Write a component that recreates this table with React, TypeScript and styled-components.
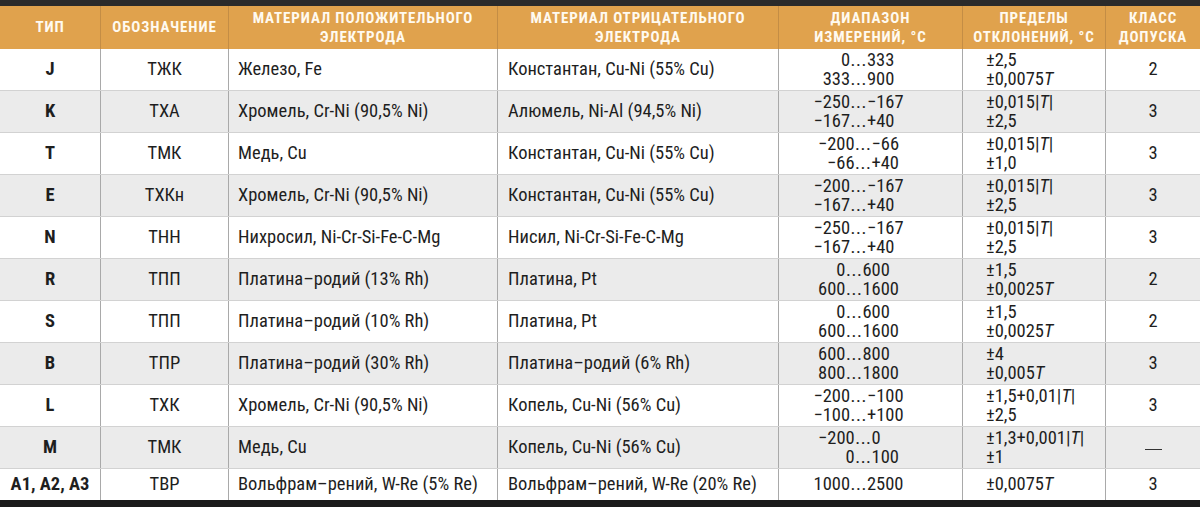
import React from "react";
import styled, { createGlobalStyle } from "styled-components";

const GlobalStyle = createGlobalStyle`
  html, body { margin: 0; padding: 0; background: #fff; }
  body { font-family: "Roboto Condensed", "Roboto", "Liberation Sans", sans-serif; color: #1e1e1e; }
`;

const COLS = "100px 128px 269px 281px 184px 143px 95px";

const Table = styled.div`
  width: 1200px;
  border-top: 6px solid #2b2b2b;
  border-bottom: 7px solid #1b1b1b;
  display: flex;
  flex-direction: column;
`;

const HeadRow = styled.div`
  display: grid;
  grid-template-columns: ${COLS};
  height: 43px;
  background: #e0a24d;
`;

const HeadCell = styled.div<{ $first?: boolean }>`
  display: flex;
  align-items: center;
  justify-content: center;
  text-align: center;
  border-left: ${(p) => (p.$first ? "none" : "1px solid #c48d45")};
  font-family: "Roboto Condensed", "Roboto", sans-serif;
  font-weight: 700;
  font-size: 15px;
  line-height: 19px;
  letter-spacing: 0.9px;
  text-transform: uppercase;
  color: #fffaf0;
`;

const Row = styled.div<{ $shaded: boolean; $last?: boolean }>`
  display: grid;
  grid-template-columns: ${COLS};
  height: ${(p) => (p.$last ? "31px" : "42px")};
  box-sizing: border-box;
  border-bottom: ${(p) => (p.$last ? "none" : "1px solid #d2d2d2")};
  background: ${(p) => (p.$shaded ? "#ebebeb" : "#ffffff")};
`;

type Align = "center" | "left" | "range";

const Cell = styled.div<{ $align: Align; $pad?: number; $first?: boolean; $bold?: boolean }>`
  display: flex;
  align-items: center;
  justify-content: ${(p) => (p.$align === "left" ? "flex-start" : "center")};
  padding-left: ${(p) => (p.$align === "left" ? `${p.$pad ?? 9}px` : "0")};
  padding-right: ${(p) => (p.$align === "range" ? "24px" : "0")};
  border-left: ${(p) => (p.$first ? "none" : "1px solid #a9a9a9")};
  font-size: 18.5px;
  line-height: 19px;
  font-weight: ${(p) => (p.$bold ? 700 : 400)};
  white-space: nowrap;
`;

const Lines = styled.div`
  display: flex;
  flex-direction: column;
`;

const RangeGrid = styled.div`
  display: grid;
  grid-template-columns: auto auto;
`;

const RangeFrom = styled.span`
  text-align: right;
`;

const RangeTo = styled.span`
  text-align: left;
`;

const Dots = styled.span`
  letter-spacing: 0.6px;
  padding-left: 0.5px;
`;

const It = styled.i`
  font-style: italic;
`;

const Dash = styled.span`
  display: inline-block;
  width: 17px;
  height: 1px;
  background: #333;
  transform: translateY(-3px);
`;

type Dev = React.ReactNode;

interface Item {
  type: string;
  code: string;
  pos: string;
  neg: string;
  ranges: [string, string][];
  devs: Dev[];
  cls: React.ReactNode;
}

const T = <It>T</It>;
const absT = (
  <>
    |<It>T</It>|
  </>
);

const data: Item[] = [
  {
    type: "J",
    code: "ТЖК",
    pos: "Железо, Fe",
    neg: "Константан, Cu-Ni (55% Cu)",
    ranges: [["0", "333"], ["333", "900"]],
    devs: ["±2,5", <>±0,0075{T}</>],
    cls: "2",
  },
  {
    type: "K",
    code: "ТХА",
    pos: "Хромель, Cr-Ni (90,5% Ni)",
    neg: "Алюмель, Ni-Al (94,5% Ni)",
    ranges: [["−250", "−167"], ["−167", "+40"]],
    devs: [<>±0,015{absT}</>, "±2,5"],
    cls: "3",
  },
  {
    type: "T",
    code: "ТМК",
    pos: "Медь, Cu",
    neg: "Константан, Cu-Ni (55% Cu)",
    ranges: [["−200", "−66"], ["−66", "+40"]],
    devs: [<>±0,015{absT}</>, "±1,0"],
    cls: "3",
  },
  {
    type: "E",
    code: "ТХКн",
    pos: "Хромель, Cr-Ni (90,5% Ni)",
    neg: "Константан, Cu-Ni (55% Cu)",
    ranges: [["−200", "−167"], ["−167", "+40"]],
    devs: [<>±0,015{absT}</>, "±2,5"],
    cls: "3",
  },
  {
    type: "N",
    code: "ТНН",
    pos: "Нихросил, Ni-Cr-Si-Fe-C-Mg",
    neg: "Нисил, Ni-Cr-Si-Fe-C-Mg",
    ranges: [["−250", "−167"], ["−167", "+40"]],
    devs: [<>±0,015{absT}</>, "±2,5"],
    cls: "3",
  },
  {
    type: "R",
    code: "ТПП",
    pos: "Платина–родий (13% Rh)",
    neg: "Платина, Pt",
    ranges: [["0", "600"], ["600", "1600"]],
    devs: ["±1,5", <>±0,0025{T}</>],
    cls: "2",
  },
  {
    type: "S",
    code: "ТПП",
    pos: "Платина–родий (10% Rh)",
    neg: "Платина, Pt",
    ranges: [["0", "600"], ["600", "1600"]],
    devs: ["±1,5", <>±0,0025{T}</>],
    cls: "2",
  },
  {
    type: "B",
    code: "ТПР",
    pos: "Платина–родий (30% Rh)",
    neg: "Платина–родий (6% Rh)",
    ranges: [["600", "800"], ["800", "1800"]],
    devs: ["±4", <>±0,005{T}</>],
    cls: "3",
  },
  {
    type: "L",
    code: "ТХК",
    pos: "Хромель, Cr-Ni (90,5% Ni)",
    neg: "Копель, Cu-Ni (56% Cu)",
    ranges: [["−200", "−100"], ["−100", "+100"]],
    devs: [<>±1,5+0,01{absT}</>, "±2,5"],
    cls: "3",
  },
  {
    type: "M",
    code: "ТМК",
    pos: "Медь, Cu",
    neg: "Копель, Cu-Ni (56% Cu)",
    ranges: [["−200", "0"], ["0", "100"]],
    devs: [<>±1,3+0,001{absT}</>, "±1"],
    cls: <span aria-label="—"><Dash /></span>,
  },
  {
    type: "A1, A2, A3",
    code: "ТВР",
    pos: "Вольфрам–рений, W-Re (5% Re)",
    neg: "Вольфрам–рений, W-Re (20% Re)",
    ranges: [["1000", "2500"]],
    devs: [<>±0,0075{T}</>],
    cls: "3",
  },
];

const headers = [
  "Тип",
  "Обозначение",
  <>Материал положительного<br />электрода</>,
  <>Материал отрицательного<br />электрода</>,
  <>Диапазон<br />измерений, °C</>,
  <>Пределы<br />отклонений, °C</>,
  <>Класс<br />допуска</>,
];

export default function App() {
  return (
    <>
      <GlobalStyle />
      <Table>
        <HeadRow>
          {headers.map((h, i) => (
            <HeadCell key={i} $first={i === 0}>
              <span>{h}</span>
            </HeadCell>
          ))}
        </HeadRow>
        {data.map((d, i) => (
          <Row key={d.type} $shaded={i % 2 === 1} $last={i === data.length - 1}>
            <Cell $align="center" $first $bold>
              {d.type}
            </Cell>
            <Cell $align="center">{d.code}</Cell>
            <Cell $align="left" $pad={9}>
              {d.pos}
            </Cell>
            <Cell $align="left" $pad={10}>
              {d.neg}
            </Cell>
            <Cell $align="range">
              <RangeGrid>
                {d.ranges.map(([a, b], k) => (
                  <React.Fragment key={k}>
                    <RangeFrom>{a}</RangeFrom>
                    <RangeTo>
                      <Dots>...</Dots>
                      {b}
                    </RangeTo>
                  </React.Fragment>
                ))}
              </RangeGrid>
            </Cell>
            <Cell $align="left" $pad={23}>
              <Lines>
                {d.devs.map((v, k) => (
                  <span key={k}>{v}</span>
                ))}
              </Lines>
            </Cell>
            <Cell $align="center">{d.cls}</Cell>
          </Row>
        ))}
      </Table>
    </>
  );
}
